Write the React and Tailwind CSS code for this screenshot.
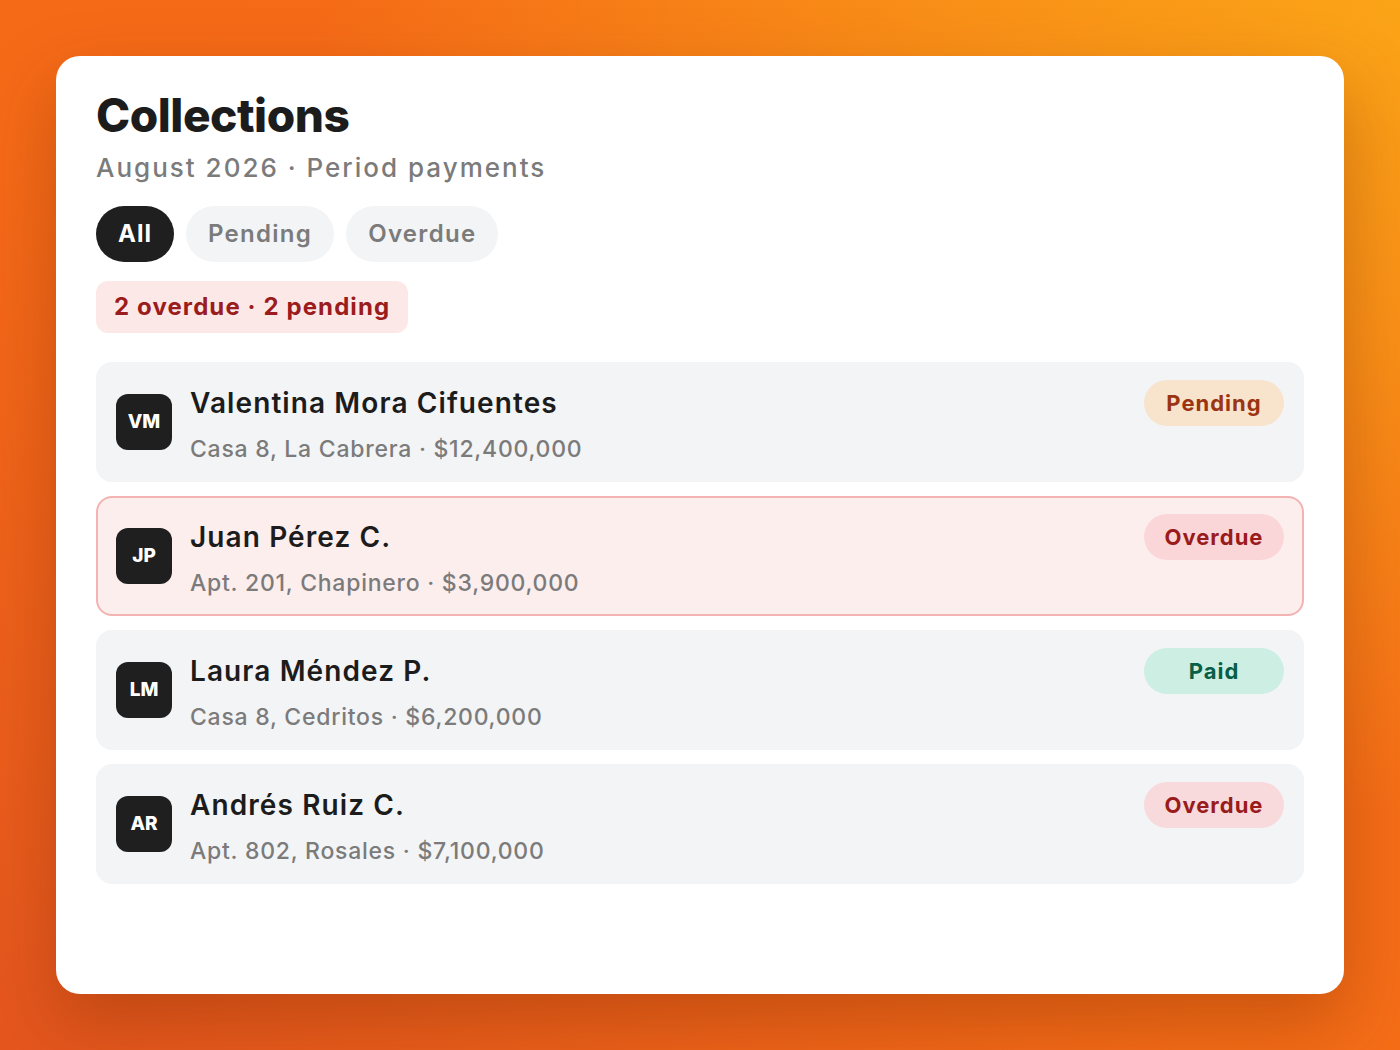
import React from "react";

const rows = [
  { initials: "VM", name: "Valentina Mora Cifuentes", sub: "Casa 8, La Cabrera · $12,400,000", status: "Pending" },
  { initials: "JP", name: "Juan Pérez C.", sub: "Apt. 201, Chapinero · $3,900,000", status: "Overdue", highlight: true },
  { initials: "LM", name: "Laura Méndez P.", sub: "Casa 8, Cedritos · $6,200,000", status: "Paid" },
  { initials: "AR", name: "Andrés Ruiz C.", sub: "Apt. 802, Rosales · $7,100,000", status: "Overdue" },
];

function Badge({ status, highlight }) {
  let cls = "";
  if (status === "Pending") cls = "bg-[#f8e3cc] text-[#9a3412]";
  else if (status === "Paid") cls = "bg-[#cdeee2] text-[#065f46]";
  else cls = highlight ? "bg-[#fbd6d8] text-[#991b1b]" : "bg-[#f8dadc] text-[#991b1b]";
  return (
    <div
      className={`self-start ${highlight ? "mt-[16px]" : "mt-[18px]"} w-[140px] h-[46px] rounded-full flex items-center justify-center text-[22px] font-bold leading-none tracking-[1px] ${cls}`}
    >
      {status}
    </div>
  );
}

export default function App() {
  return (
    <div
      className="w-[1400px] h-[1050px] p-14 bg-[radial-gradient(ellipse_at_100%_0%,#fba417_0%,rgba(251,164,23,0.6)_25%,rgba(251,164,23,0)_55%),radial-gradient(ellipse_at_0%_100%,#e4561e_0%,rgba(228,86,30,0)_60%),linear-gradient(135deg,#f56a17,#f56d17)]"
      style={{ fontFamily: "Inter, 'Noto Sans', sans-serif" }}
    >
      <div className="w-full h-full bg-white rounded-[24px] shadow-[0_30px_70px_rgba(120,40,0,0.35)] pt-[36px] px-10">
        <h1 className="text-[46px] leading-[46px] font-extrabold text-[#1c1c1c] tracking-[-0.01em]">Collections</h1>
        <p className="mt-[14px] text-[26px] leading-[32px] font-medium text-[#7b7b7b] tracking-[2px]">August 2026 · Period payments</p>
        <div className="mt-[22px] flex gap-3">
          <div className="h-14 px-[22px] rounded-full bg-[#1f1f1f] text-white text-[24px] font-bold tracking-[1px] flex items-center">All</div>
          <div className="h-14 px-[22px] rounded-full bg-[#f3f4f6] text-[#7b7b7b] text-[24px] font-semibold tracking-[1.3px] flex items-center">Pending</div>
          <div className="h-14 px-[22px] rounded-full bg-[#f3f4f6] text-[#7b7b7b] text-[24px] font-semibold tracking-[1.3px] flex items-center">Overdue</div>
        </div>
        <div className="mt-[19px] inline-flex h-[52px] px-[18px] items-center rounded-[12px] bg-[#fde8e8] text-[#9b1c1c] text-[24px] font-bold tracking-[1.1px]">
          2 overdue · 2 pending
        </div>
        <div className="mt-[29px] flex flex-col gap-[14px]">
          {rows.map((r) => (
            <div
              key={r.initials}
              className={`h-[120px] rounded-[16px] flex items-center ${r.highlight ? "bg-[#fdeeee] border-2 border-[#f3b3b3] px-[18px]" : "bg-[#f3f4f6] px-5"}`}
            >
              <div className="w-14 h-14 rounded-[12px] bg-[#1f1f1f] text-white text-[19px] font-extrabold flex items-center justify-center shrink-0">
                {r.initials}
              </div>
              <div className={`ml-[18px] flex-1 flex flex-col self-start ${r.highlight ? "mt-[22px]" : "mt-[24px]"}`}>
                <div className="text-[28px] leading-[34px] font-semibold text-[#1c1c1c] tracking-[1.1px]">{r.name}</div>
                <div className="mt-[14px] text-[23px] leading-[30px] font-medium text-[#7b7b7b] tracking-[0.75px]">{r.sub}</div>
              </div>
              <Badge status={r.status} highlight={r.highlight} />
            </div>
          ))}
        </div>
      </div>
    </div>
  );
}
